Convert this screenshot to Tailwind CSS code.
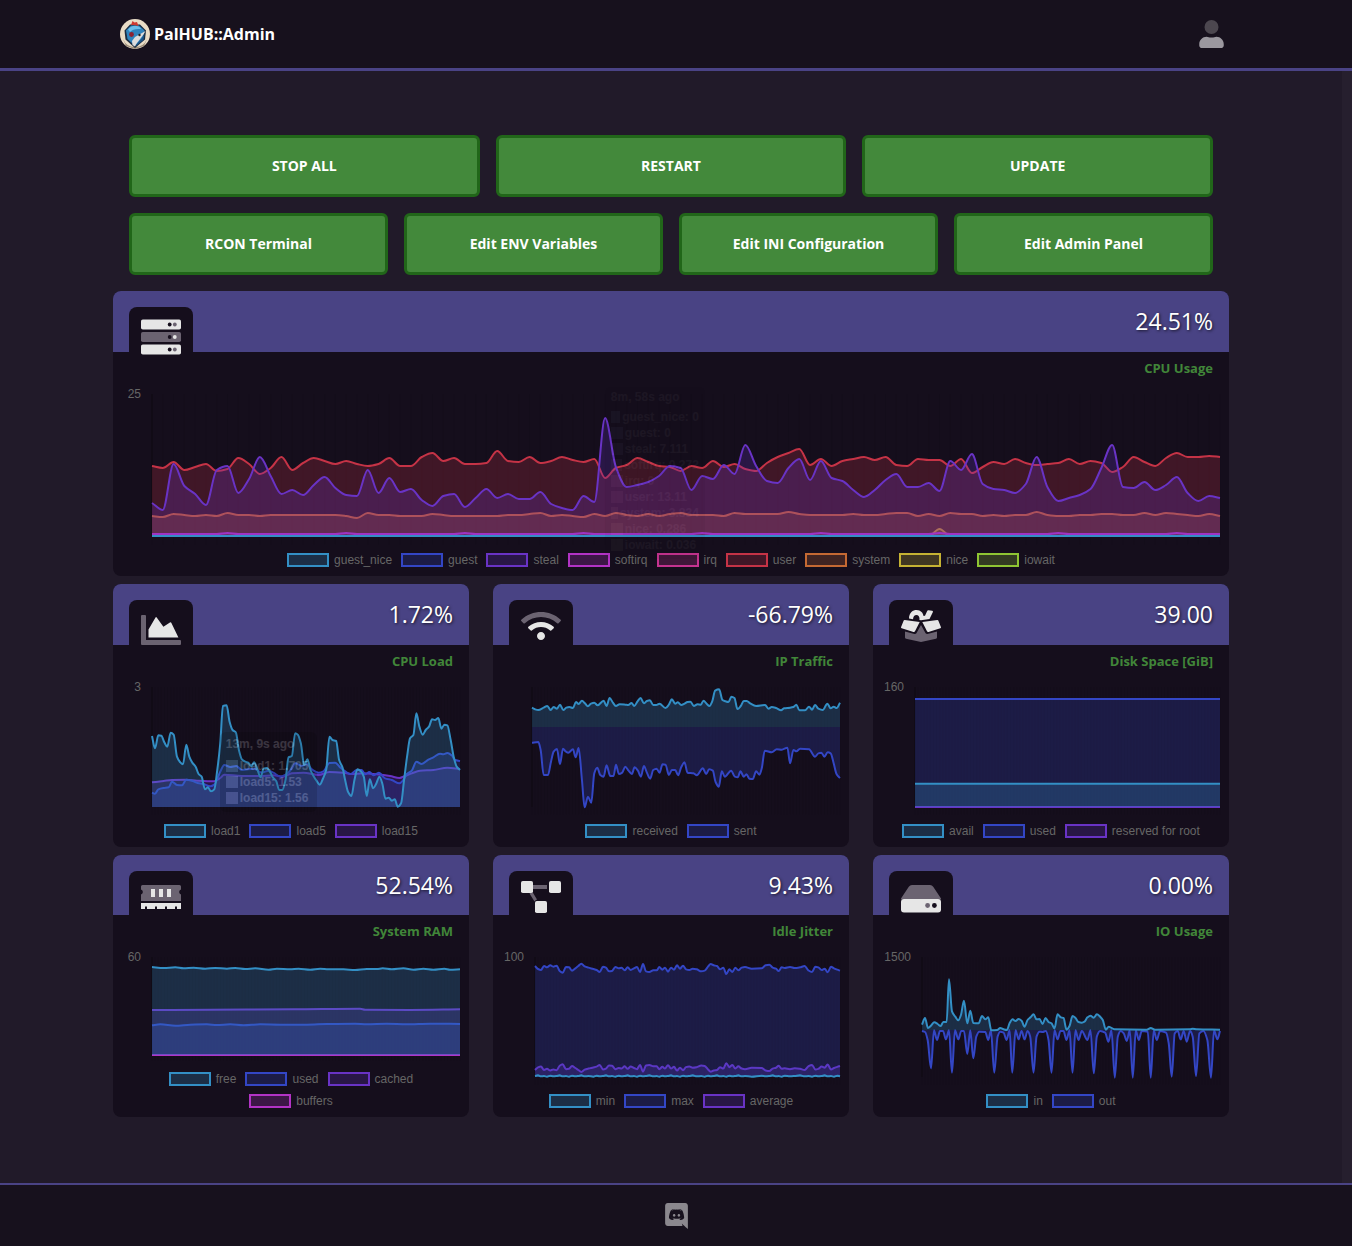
<!DOCTYPE html>
<html lang="en">
<head>
<meta charset="utf-8">
<meta name="viewport" content="width=device-width, initial-scale=1">
<title>PalHUB::Admin</title>
<script src="https://cdn.jsdelivr.net/npm/@tailwindcss/browser@4"></script>
</head>
<body class="flex min-h-screen flex-col bg-[#211a29] font-['Open_Sans','Noto_Sans',sans-serif] text-white">

<header class="border-b-3 border-[#4a4385] bg-[#17111d]">
  <div class="mx-auto flex h-17 max-w-[1116px] items-center justify-between pr-[10px] pl-[2px]">
    <a href="#" class="flex items-center gap-1 text-base font-bold">
      <svg class="size-[30px]" viewBox="0 0 30 30" aria-hidden="true">
        <circle cx="15" cy="15" r="15" fill="#e9dcc6"/>
        <path d="M3 20a13 13 0 0 0 24 0l-3 7-9 3-9-3z" fill="#9c8d78"/>
        <path d="M4.500 11.500 10 5.500h10L26 11.500l-1 9-10 8.500-9.500-8.500z" fill="#1b2c40"/>
        <path d="M6 11.500 11 6.500h8l5.500 5-2 9-7.500 6.500-7.500-7z" fill="#2f83bd"/>
        <path d="M8 10.500c3-5 11-5 13-.500-5-.500-9 .500-11 3z" fill="#69bdea"/>
        <path d="M11 6 12.500 2l2 1.500L17 3l1.500 4-4-1z" fill="#cf3a32"/>
        <circle cx="11.500" cy="15.500" r="2.400" fill="#8e2230"/>
        <path d="M25.500 12 15 18l-3 4 .500 4 2.500 1.500c2-5 6-7 10.500-15.500z" fill="#dcdcdc"/>
        <circle cx="19.500" cy="16" r="1.200" fill="#222"/>
        <path d="M16 27c1-3 5-6 8.500-12l-1 6z" fill="#1b5488"/>
      </svg>
      PalHUB::Admin
    </a>
    <button type="button" aria-label="Account">
      <svg class="h-7 w-[25px]" viewBox="0 0 448 512" aria-hidden="true">
        <circle cx="224" cy="128" r="128" fill="#4c474f"/>
        <path fill="#9b989f" d="M313.600 304c-28.700 0-42.500 16-89.600 16-47.100 0-60.800-16-89.600-16C60.200 304 0 364.200 0 438.400V464c0 26.500 21.500 48 48 48h352c26.500 0 48-21.500 48-48v-25.600c0-74.200-60.200-134.400-134.400-134.400z"/>
      </svg>
    </button>
  </div>
</header>

<main class="flex-1 border-r-10 border-[#261f2e] py-16">
  <div class="mx-auto flex max-w-[1116px] flex-col gap-4">

    <div class="flex flex-col gap-4 px-4 text-sm font-bold [text-shadow:1px_1px_2px_rgba(0,0,0,0.6)]">
      <div class="grid grid-cols-3 gap-4">
        <button type="button" class="h-[62px] rounded-md border-3 border-[#216619] bg-[#43893b]">STOP ALL</button>
        <button type="button" class="h-[62px] rounded-md border-3 border-[#216619] bg-[#43893b]">RESTART</button>
        <button type="button" class="h-[62px] rounded-md border-3 border-[#216619] bg-[#43893b]">UPDATE</button>
      </div>
      <div class="grid grid-cols-4 gap-4">
        <button type="button" class="h-[62px] rounded-md border-3 border-[#216619] bg-[#43893b]">RCON Terminal</button>
        <button type="button" class="h-[62px] rounded-md border-3 border-[#216619] bg-[#43893b]">Edit ENV Variables</button>
        <button type="button" class="h-[62px] rounded-md border-3 border-[#216619] bg-[#43893b]">Edit INI Configuration</button>
        <button type="button" class="h-[62px] rounded-md border-3 border-[#216619] bg-[#43893b]">Edit Admin Panel</button>
      </div>
    </div>

    <div class="grid grid-cols-3 gap-x-6 gap-y-2">

      <!-- CPU usage -->
      <section class="col-span-3 rounded-lg bg-[#150e1c] pb-[9px]">
        <div class="flex h-[61px] items-center justify-between rounded-t-lg bg-[#494384] px-4">
          <div class="mt-4 h-[45px] w-16 self-start rounded-t-lg bg-[#150e1c] px-3 pt-[10px]">
            <svg class="size-10" viewBox="0 0 40 40" aria-hidden="true">
              <rect y="2.500" width="40" height="10" rx="1.800" fill="#e6e6e6"/><rect y="15" width="40" height="10" rx="1.800" fill="#6b6371"/><rect y="27.500" width="40" height="10" rx="1.800" fill="#e6e6e6"/>
              <g fill="#150e1c"><circle cx="28.700" cy="7.500" r="1.900"/><circle cx="28.700" cy="20" r="1.900"/><circle cx="28.700" cy="32.500" r="1.900"/></g>
              <circle cx="33.800" cy="7.500" r="1.900" fill="#6b6371"/><circle cx="33.800" cy="20" r="1.900" fill="#e6e6e6"/><circle cx="33.800" cy="32.500" r="1.900" fill="#6b6371"/>
            </svg>
          </div>
          <p class="text-[23px] [text-shadow:1px_1px_3px_rgba(0,0,0,0.7)]">24.51%</p>
        </div>
        <h2 class="mb-[10px] flex h-8 items-center justify-end px-4 pt-[2px] text-[13px] font-bold text-[#418639]">CPU Usage</h2>
        <div class="flex pr-[9px]">
          <div class="-mt-2 w-[39px] pr-[11px] text-right font-['Liberation_Sans',sans-serif] text-xs text-[#666]">25</div>
          <div class="relative min-w-0 flex-1">
            <svg data-chart="cpu" class="block h-[142px] w-full overflow-visible" viewBox="0 0 1068 142" preserveAspectRatio="none"></svg>
            <div class="absolute -top-[7px] left-[42.4%] w-25 rounded-md bg-black p-[6px] font-['Liberation_Sans',sans-serif] text-xs leading-4 font-bold whitespace-nowrap text-white opacity-3">
              <p class="-mt-1 mb-1">8m, 58s ago</p>
              <p class="flex items-center gap-[2px]"><span class="size-3 bg-[#9fc9e4]"></span>guest_nice: 0</p>
              <p class="flex items-center gap-[2px]"><span class="size-3 bg-[#9fa8e4]"></span>guest: 0</p>
              <p class="flex items-center gap-[2px]"><span class="size-3 bg-[#b89fe4]"></span>steal: 7.111</p>
              <p class="flex items-center gap-[2px]"><span class="size-3 bg-[#d89fe4]"></span>softirq: 0.272</p>
              <p class="flex items-center gap-[2px]"><span class="size-3 bg-[#e49fc9]"></span>irq: 0</p>
              <p class="flex items-center gap-[2px]"><span class="size-3 bg-[#e49fa8]"></span>user: 13.11</p>
              <p class="flex items-center gap-[2px]"><span class="size-3 bg-[#e4b89f]"></span>system: 3.834</p>
              <p class="flex items-center gap-[2px]"><span class="size-3 bg-[#e4d89f]"></span>nice: 0.286</p>
              <p class="flex items-center gap-[2px]"><span class="size-3 bg-[#c9e49f]"></span>iowait: 0.036</p>
            </div>
          </div>
        </div>
        <ul class="mt-[17px] flex flex-wrap justify-center gap-x-[9px] gap-y-2 font-['Liberation_Sans',sans-serif] text-xs leading-[14px] text-[#666]">
          <li class="flex items-center gap-[5px]"><span class="h-[14px] w-[42px] border-2 border-[#338fc5] bg-[#338fc5]/25"></span>guest_nice</li>
          <li class="flex items-center gap-[5px]"><span class="h-[14px] w-[42px] border-2 border-[#3346c5] bg-[#3346c5]/25"></span>guest</li>
          <li class="flex items-center gap-[5px]"><span class="h-[14px] w-[42px] border-2 border-[#6933c5] bg-[#6933c5]/25"></span>steal</li>
          <li class="flex items-center gap-[5px]"><span class="h-[14px] w-[42px] border-2 border-[#b233c5] bg-[#b233c5]/25"></span>softirq</li>
          <li class="flex items-center gap-[5px]"><span class="h-[14px] w-[42px] border-2 border-[#c5338f] bg-[#c5338f]/25"></span>irq</li>
          <li class="flex items-center gap-[5px]"><span class="h-[14px] w-[42px] border-2 border-[#c53346] bg-[#c53346]/25"></span>user</li>
          <li class="flex items-center gap-[5px]"><span class="h-[14px] w-[42px] border-2 border-[#c56933] bg-[#c56933]/25"></span>system</li>
          <li class="flex items-center gap-[5px]"><span class="h-[14px] w-[42px] border-2 border-[#c5b233] bg-[#c5b233]/25"></span>nice</li>
          <li class="flex items-center gap-[5px]"><span class="h-[14px] w-[42px] border-2 border-[#8fc533] bg-[#8fc533]/25"></span>iowait</li>
        </ul>
      </section>

      <!-- CPU load -->
      <section class="rounded-lg bg-[#150e1c] pb-[9px]">
        <div class="flex h-[61px] items-center justify-between rounded-t-lg bg-[#494384] px-4">
          <div class="mt-4 h-[45px] w-16 self-start rounded-t-lg bg-[#150e1c] px-3 pt-[10px]">
            <svg class="size-10" viewBox="0 0 40 40" aria-hidden="true">
              <path d="M1 5h3a1 1 0 0 1 1 1v24h34a1 1 0 0 1 1 1v3a1 1 0 0 1-1 1H1a1 1 0 0 1-1-1V6a1 1 0 0 1 1-1z" fill="#6b6371"/>
              <path d="M7.500 27.500v-8L14.500 7.500q.600-.900 1.200 0l6.700 9.300 6.500-4.300q1-.600 1.500.400l7 14.600z" fill="#e6e6e6"/>
            </svg>
          </div>
          <p class="text-[23px] [text-shadow:1px_1px_3px_rgba(0,0,0,0.7)]">1.72%</p>
        </div>
        <h2 class="mb-[10px] flex h-8 items-center justify-end px-4 pt-[2px] text-[13px] font-bold text-[#418639]">CPU Load</h2>
        <div class="flex pr-[9px]">
          <div class="-mt-2 w-[39px] pr-[11px] text-right font-['Liberation_Sans',sans-serif] text-xs text-[#666]">3</div>
          <div class="relative min-w-0 flex-1">
            <svg data-chart="load" class="block h-[120px] w-full overflow-visible" viewBox="125 321 925 360" preserveAspectRatio="none"></svg>
            <div class="absolute top-[45px] left-[22%] w-[97px] rounded-md bg-black/80 p-[6px] font-['Liberation_Sans',sans-serif] text-xs leading-4 font-bold whitespace-nowrap text-white opacity-16">
              <p class="-mt-[2px] mb-[6px]">13m, 9s ago</p>
              <p class="flex items-center gap-[2px]"><span class="size-3 bg-[#9fc9e4]"></span>load1: 1.705</p>
              <p class="flex items-center gap-[2px]"><span class="size-3 bg-[#c0c6f0]"></span>load5: 1.53</p>
              <p class="flex items-center gap-[2px]"><span class="size-3 bg-[#cfc0f0]"></span>load15: 1.56</p>
            </div>
          </div>
        </div>
        <ul class="mt-[17px] flex flex-wrap justify-center gap-x-[9px] gap-y-2 font-['Liberation_Sans',sans-serif] text-xs leading-[14px] text-[#666]">
          <li class="flex items-center gap-[5px]"><span class="h-[14px] w-[42px] border-2 border-[#338fc5] bg-[#338fc5]/25"></span>load1</li>
          <li class="flex items-center gap-[5px]"><span class="h-[14px] w-[42px] border-2 border-[#3346c5] bg-[#3346c5]/25"></span>load5</li>
          <li class="flex items-center gap-[5px]"><span class="h-[14px] w-[42px] border-2 border-[#6933c5] bg-[#6933c5]/25"></span>load15</li>
        </ul>
      </section>

      <!-- IP traffic -->
      <section class="rounded-lg bg-[#150e1c] pb-[9px]">
        <div class="flex h-[61px] items-center justify-between rounded-t-lg bg-[#494384] px-4">
          <div class="mt-4 h-[45px] w-16 self-start rounded-t-lg bg-[#150e1c] px-3 pt-[10px]">
            <svg class="h-8 w-10" viewBox="0 0 640 512" aria-hidden="true">
              <path fill="#6b6371" d="M634.910 154.880C457.740-8.990 182.190-8.930 5.090 154.880c-6.660 6.160-6.790 16.590-.350 22.980l34.240 33.970c6.140 6.100 16.020 6.230 22.400.380 145.920-133.680 371.300-133.710 517.250 0 6.380 5.850 16.260 5.710 22.400-.380l34.240-33.970c6.430-6.390 6.300-16.820-.360-22.980z"/>
              <path fill="#e6e6e6" d="M320 352c-35.350 0-64 28.650-64 64s28.650 64 64 64 64-28.650 64-64-28.650-64-64-64zm202.670-83.590c-115.260-101.930-290.210-101.820-405.340 0-6.900 6.100-7.120 16.690-.570 23.150l34.440 33.990c6 5.920 15.660 6.320 22.050.800 83.950-72.570 209.740-72.410 293.490 0 6.390 5.520 16.050 5.130 22.050-.800l34.440-33.990c6.560-6.460 6.330-17.060-.560-23.150z"/>
            </svg>
          </div>
          <p class="text-[23px] [text-shadow:1px_1px_3px_rgba(0,0,0,0.7)]">-66.79%</p>
        </div>
        <h2 class="mb-[10px] flex h-8 items-center justify-end px-4 pt-[2px] text-[13px] font-bold text-[#418639]">IP Traffic</h2>
        <div class="flex pr-[9px] pl-[39px]">
          <svg data-chart="traffic" class="block h-[120px] w-full overflow-visible" viewBox="125 321 925 360" preserveAspectRatio="none"></svg>
        </div>
        <ul class="mt-[17px] flex flex-wrap justify-center gap-x-[9px] gap-y-2 font-['Liberation_Sans',sans-serif] text-xs leading-[14px] text-[#666]">
          <li class="flex items-center gap-[5px]"><span class="h-[14px] w-[42px] border-2 border-[#338fc5] bg-[#338fc5]/25"></span>received</li>
          <li class="flex items-center gap-[5px]"><span class="h-[14px] w-[42px] border-2 border-[#3346c5] bg-[#3346c5]/25"></span>sent</li>
        </ul>
      </section>

      <!-- Disk space -->
      <section class="rounded-lg bg-[#150e1c] pb-[9px]">
        <div class="flex h-[61px] items-center justify-between rounded-t-lg bg-[#494384] px-4">
          <div class="mt-4 h-[45px] w-16 self-start rounded-t-lg bg-[#150e1c] px-3 pt-[10px]">
            <svg class="size-10" viewBox="0 0 40 40" aria-hidden="true">
              <path d="M4 21.500 13.500 24q1.200.200 1.900-.800L20 15l4.600 8.200q.700 1 1.900.800L36 21.500v6q0 1-1 1.300L20 32 5 28.800q-1-.300-1-1.300z" fill="#6b6371"/>
              <path d="M3.700 10 18.700 12 14 21.300q-.500.900-1.500.600L.700 18.300q-.900-.300-.600-1.200L2.700 10.600q.300-.700 1-.600zM36.300 10l-15 2L26 21.300q.500.900 1.500.600l11.800-3.600q.900-.300.600-1.200l-2.600-6.500q-.300-.700-1-.600z" fill="#e6e6e6"/>
              <path d="M8 8.500C8 2.500 12 0 15.500 0c4.300 0 6.800 3.200 7 6l1.500-.300L26.300.800q.400-.900 1.300-.600l3.500.600q1.200.300.700 1.400L28.500 9 20 10.200l-1.600-.300c.500-3-.900-4.900-2.900-4.900-2.100 0-3.300 1.500-3.500 4.200z" fill="#e6e6e6"/>
            </svg>
          </div>
          <p class="text-[23px] [text-shadow:1px_1px_3px_rgba(0,0,0,0.7)]">39.00</p>
        </div>
        <h2 class="mb-[10px] flex h-8 items-center justify-end px-4 pt-[2px] text-[13px] font-bold text-[#418639]">Disk Space [GiB]</h2>
        <div class="flex pr-[9px]">
          <div class="-mt-2 w-[42px] pr-[11px] text-right font-['Liberation_Sans',sans-serif] text-xs text-[#666]">160</div>
          <svg data-chart="disk" class="block h-[120px] min-w-0 flex-1 overflow-visible" viewBox="135 321 915 360" preserveAspectRatio="none"></svg>
        </div>
        <ul class="mt-[17px] flex flex-wrap justify-center gap-x-[9px] gap-y-2 font-['Liberation_Sans',sans-serif] text-xs leading-[14px] text-[#666]">
          <li class="flex items-center gap-[5px]"><span class="h-[14px] w-[42px] border-2 border-[#338fc5] bg-[#338fc5]/25"></span>avail</li>
          <li class="flex items-center gap-[5px]"><span class="h-[14px] w-[42px] border-2 border-[#3346c5] bg-[#3346c5]/25"></span>used</li>
          <li class="flex items-center gap-[5px]"><span class="h-[14px] w-[42px] border-2 border-[#6933c5] bg-[#6933c5]/25"></span>reserved for root</li>
        </ul>
      </section>

      <!-- System RAM -->
      <section class="rounded-lg bg-[#150e1c] pb-[9px]">
        <div class="flex h-[60px] items-center justify-between rounded-t-lg bg-[#494384] px-4">
          <div class="mt-4 h-11 w-16 self-start rounded-t-lg bg-[#150e1c] px-3 pt-[10px]">
            <svg class="size-10" viewBox="0 0 40 40" aria-hidden="true">
              <path d="M0 5.500Q0 4 1.500 4h37Q40 4 40 5.500v3a2.600 2.600 0 0 0 0 5V20H0v-6.500a2.600 2.600 0 0 0 0-5z" fill="#6b6371"/>
              <path d="M10 8h4v8h-4zM18 8h4v8h-4zM26 8h4v8h-4zM0 22h40v6h-4v-2.500h-2V28h-8v-2.500h-2V28h-8v-2.500h-2V28H6v-2.500H4V28H0z" fill="#e6e6e6"/>
            </svg>
          </div>
          <p class="text-[23px] [text-shadow:1px_1px_3px_rgba(0,0,0,0.7)]">52.54%</p>
        </div>
        <h2 class="mb-[10px] flex h-8 items-center justify-end px-4 pt-[2px] text-[13px] font-bold text-[#418639]">System RAM</h2>
        <div class="flex pr-[9px]">
          <div class="-mt-2 w-[39px] pr-[11px] text-right font-['Liberation_Sans',sans-serif] text-xs text-[#666]">60</div>
          <svg data-chart="ram" class="block h-[98px] min-w-0 flex-1 overflow-visible" viewBox="125 321 925 294" preserveAspectRatio="none"></svg>
        </div>
        <ul class="mx-auto mt-[17px] flex max-w-[300px] flex-wrap justify-center gap-x-[9px] gap-y-2 font-['Liberation_Sans',sans-serif] text-xs leading-[14px] text-[#666]">
          <li class="flex items-center gap-[5px]"><span class="h-[14px] w-[42px] border-2 border-[#338fc5] bg-[#338fc5]/25"></span>free</li>
          <li class="flex items-center gap-[5px]"><span class="h-[14px] w-[42px] border-2 border-[#3346c5] bg-[#3346c5]/25"></span>used</li>
          <li class="flex items-center gap-[5px]"><span class="h-[14px] w-[42px] border-2 border-[#6933c5] bg-[#6933c5]/25"></span>cached</li>
          <li class="flex items-center gap-[5px]"><span class="h-[14px] w-[42px] border-2 border-[#b233c5] bg-[#b233c5]/25"></span>buffers</li>
        </ul>
      </section>

      <!-- Idle jitter -->
      <section class="rounded-lg bg-[#150e1c] pb-[9px]">
        <div class="flex h-[60px] items-center justify-between rounded-t-lg bg-[#494384] px-4">
          <div class="mt-4 h-11 w-16 self-start rounded-t-lg bg-[#150e1c] px-3 pt-[10px]">
            <svg class="size-10" viewBox="0 0 40 40" aria-hidden="true">
              <path d="M12 4h14v4H12zM8.500 12.500l3-1.500L16 18.500q-1.600.600-2.500 2z" fill="#6b6371"/>
              <g fill="#e6e6e6"><rect width="12" height="12" rx="1.800"/><rect x="28" width="12" height="12" rx="1.800"/><rect x="14" y="20" width="12" height="12" rx="1.800"/></g>
            </svg>
          </div>
          <p class="text-[23px] [text-shadow:1px_1px_3px_rgba(0,0,0,0.7)]">9.43%</p>
        </div>
        <h2 class="mb-[10px] flex h-8 items-center justify-end px-4 pt-[2px] text-[13px] font-bold text-[#418639]">Idle Jitter</h2>
        <div class="flex pr-[9px]">
          <div class="-mt-2 w-[42px] pr-[11px] text-right font-['Liberation_Sans',sans-serif] text-xs text-[#666]">100</div>
          <svg data-chart="jitter" class="block h-[120px] min-w-0 flex-1 overflow-visible" viewBox="135 321 915 360" preserveAspectRatio="none"></svg>
        </div>
        <ul class="mt-[17px] flex flex-wrap justify-center gap-x-[9px] gap-y-2 font-['Liberation_Sans',sans-serif] text-xs leading-[14px] text-[#666]">
          <li class="flex items-center gap-[5px]"><span class="h-[14px] w-[42px] border-2 border-[#338fc5] bg-[#338fc5]/25"></span>min</li>
          <li class="flex items-center gap-[5px]"><span class="h-[14px] w-[42px] border-2 border-[#3346c5] bg-[#3346c5]/25"></span>max</li>
          <li class="flex items-center gap-[5px]"><span class="h-[14px] w-[42px] border-2 border-[#6933c5] bg-[#6933c5]/25"></span>average</li>
        </ul>
      </section>

      <!-- IO usage -->
      <section class="rounded-lg bg-[#150e1c] pb-[9px]">
        <div class="flex h-[60px] items-center justify-between rounded-t-lg bg-[#494384] px-4">
          <div class="mt-4 h-11 w-16 self-start rounded-t-lg bg-[#150e1c] px-3 pt-[10px]">
            <svg class="size-10" viewBox="0 0 40 40" aria-hidden="true">
              <path d="M7.800 5.800Q8.900 4 11 4h18q2.100 0 3.200 1.800L40 17.500v1H0v-1z" fill="#6b6371"/>
              <rect y="18" width="40" height="13.500" rx="3" fill="#e6e6e6"/>
              <circle cx="26.600" cy="24.500" r="2.400" fill="#6b6371"/><circle cx="33.400" cy="24.500" r="2.400" fill="#150e1c"/>
            </svg>
          </div>
          <p class="text-[23px] [text-shadow:1px_1px_3px_rgba(0,0,0,0.7)]">0.00%</p>
        </div>
        <h2 class="mb-[10px] flex h-8 items-center justify-end px-4 pt-[2px] text-[13px] font-bold text-[#418639]">IO Usage</h2>
        <div class="flex pr-[9px]">
          <div class="-mt-2 w-[49px] pr-[11px] text-right font-['Liberation_Sans',sans-serif] text-xs text-[#666]">1500</div>
          <svg data-chart="io" class="block h-[120px] min-w-0 flex-1 overflow-visible" viewBox="155 321 895 360" preserveAspectRatio="none"></svg>
        </div>
        <ul class="mt-[17px] flex flex-wrap justify-center gap-x-[9px] gap-y-2 font-['Liberation_Sans',sans-serif] text-xs leading-[14px] text-[#666]">
          <li class="flex items-center gap-[5px]"><span class="h-[14px] w-[42px] border-2 border-[#338fc5] bg-[#338fc5]/25"></span>in</li>
          <li class="flex items-center gap-[5px]"><span class="h-[14px] w-[42px] border-2 border-[#3346c5] bg-[#3346c5]/25"></span>out</li>
        </ul>
      </section>
    </div>
  </div>
</main>

<footer class="flex h-[63px] items-center justify-center border-t-2 border-[#4a4385] bg-[#17111d]">
  <a href="#" aria-label="Discord">
    <svg class="h-[26px] w-[23px]" viewBox="0 0 448 512" aria-hidden="true"><path fill="#8b888e" d="M297.216 243.200c0 15.616-11.520 28.416-26.112 28.416-14.336 0-26.112-12.800-26.112-28.416s11.520-28.416 26.112-28.416c14.592 0 26.112 12.800 26.112 28.416zm-119.552-28.416c-14.592 0-26.112 12.800-26.112 28.416s11.776 28.416 26.112 28.416c14.592 0 26.112-12.800 26.112-28.416.256-15.616-11.520-28.416-26.112-28.416zM448 52.736V512c-64.494-56.994-43.868-38.128-118.784-107.776l13.568 47.360H52.480C23.552 451.584 0 428.032 0 398.848V52.736C0 23.552 23.552 0 52.480 0h343.040C424.448 0 448 23.552 448 52.736zm-72.960 242.688c0-82.432-36.864-149.248-36.864-149.248-36.864-27.648-71.936-26.880-71.936-26.880l-3.584 4.096c43.520 13.312 63.744 32.512 63.744 32.512-60.811-33.329-132.244-33.335-191.232-7.424-9.472 4.352-15.104 7.424-15.104 7.424s21.248-20.224 67.328-33.536l-2.560-3.072s-35.072-.768-71.936 26.880c0 0-36.864 66.816-36.864 149.248 0 0 21.504 37.120 78.080 38.912 0 0 9.472-11.520 17.152-21.248-32.512-9.728-44.800-30.208-44.800-30.208 3.766 2.636 9.976 6.053 10.496 6.400 43.210 24.198 104.588 32.126 159.744 8.960 8.960-3.328 18.944-8.192 29.440-15.104 0 0-12.800 20.992-46.336 30.464 7.680 9.728 16.896 20.736 16.896 20.736 56.576-1.792 78.336-38.912 78.336-38.912z"/></svg>
  </a>
</footer>

<script>
const C = { blue: '#338fc5', indigo: '#3346c5', violet: '#6933c5', magenta: '#b233c5', pink: '#c5338f', red: '#c53346', orange: '#c56933', yellow: '#c5b233', lime: '#8fc533' };

// "x,y x,y ..." -> points
const pts = s => s.trim().split(/\s+/).map(p => p.split(',').map(Number));
// evenly spaced samples over a width
const even = (ys, w) => ys.map((y, i) => [i * w / (ys.length - 1), y]);
const flat = (y, x0, x1) => [[x0, y], [x1, y]];

// monotone cubic line through the points
function curve(p) {
  const n = p.length, d = [], m = [];
  for (let i = 0; i < n - 1; i++) d.push((p[i + 1][1] - p[i][1]) / (p[i + 1][0] - p[i][0]));
  for (let i = 0; i < n; i++) {
    if (i === 0) m.push(d[0]);
    else if (i === n - 1) m.push(d[n - 2]);
    else if (d[i - 1] * d[i] <= 0) m.push(0);
    else m.push(2 * d[i - 1] * d[i] / (d[i - 1] + d[i]));
  }
  let s = `M${p[0][0]} ${p[0][1]}`;
  for (let i = 0; i < n - 1; i++) {
    const h = (p[i + 1][0] - p[i][0]) / 3;
    s += `C${p[i][0] + h} ${p[i][1] + m[i] * h} ${p[i + 1][0] - h} ${p[i + 1][1] - m[i + 1] * h} ${p[i + 1][0]} ${p[i + 1][1]}`;
  }
  return s;
}

const user = [72,74,68,76,73,70,77,75,64,70,80,74,63,76,69,64,67,70,67,70,72,70,64,72,72,63,59,67,64,70,70,69,57,67,68,63,69,67,63,66,68,65,84,74,71,64,68,72,73,77,72,74,67,73,70,75,77,69,63,59,55,71,65,72,67,65,63,66,63,71,72,65,66,66,72,65,79,73,68,70,65,69,71,70,69,65,70,67,69,78,73,63,68,72,64,59,63,63,62,63];
const steal = [109,116,70,92,100,111,76,72,99,85,63,82,100,96,101,91,83,94,101,102,76,99,84,98,95,106,112,102,100,113,104,95,104,100,105,105,98,110,114,116,102,108,24,73,93,91,88,82,72,74,96,82,85,71,80,51,72,87,89,74,65,86,67,84,87,96,103,96,86,80,93,93,89,97,67,76,60,90,95,96,99,90,63,93,107,104,101,95,74,51,93,94,88,96,91,83,99,107,102,104];
const system = [122,123,120,121,122,121,122,119,121,121,122,121,121,121,121,121,121,121,122,124,119,121,121,122,122,122,120,121,122,122,122,122,122,121,121,120,119,122,121,122,123,120,122,119,121,122,120,122,120,119,121,121,121,122,119,120,120,120,120,118,120,121,121,121,121,120,121,121,120,119,119,122,120,122,119,120,120,122,121,122,121,121,118,121,122,122,121,121,120,120,121,121,119,121,119,120,121,122,120,122];
const nice = user.map((_, i) => i === 73 ? 135 : 142);
const softirq = user.map((_, i) => i % 11 === 7 ? 139 : 140);

const jitterMax = pts('135,348 144,357 153,360 162,348 171,352 181,346 190,350 200,347 209,363 218,368 228,351 237,352 246,362 256,355 265,348 274,341 284,349 295,353 310,357 320,360 329,366 339,350 348,353 357,364 366,363 376,351 386,355 395,353 404,361 413,352 422,360 432,355 441,351 450,366 459,342 468,364 478,366 490,361 500,361 508,351 517,359 525,353 534,365 543,353 552,359 561,346 570,356 579,347 588,358 598,360 608,356 620,358 634,364 644,362 654,350 662,342 671,346 681,348 690,358 700,353 709,372 718,358 727,366 736,353 745,361 755,353 765,351 785,356 815,355 827,346 838,344 848,353 858,356 866,363 875,352 884,354 900,351 914,354 930,352 944,348 955,361 966,366 976,350 985,352 995,360 1004,356 1013,367 1023,350 1032,355 1042,359 1050,362');
const jitterAvg = jitterMax.map(([x, y]) => [x, 654 - (y - 355) * 0.85]);
const jitterMin = jitterMax.map(([x], i) => [x, 678 + [0, -2, 1, 0, 2, -1, 1][i % 7]]);

// first series is painted last, so it lies on top
const charts = {
  cpu: { base: 142, series: [
    [C.blue, even([142, 142], 1068)], [C.indigo, even([142, 142], 1068)], [C.violet, even(steal, 1068)], [C.magenta, even(softirq, 1068)],
    [C.pink, even([142, 142], 1068)], [C.red, even(user, 1068)], [C.orange, even(system, 1068)], [C.yellow, even(nice, 1068)], [C.lime, even([142, 142], 1068)] ] },
  load: { base: 681, series: [
    [C.blue, pts('125,468 134,505 144,466 153,467 162,487 171,500 181,458 190,464 200,530 209,546 218,553 228,494 237,530 246,548 256,560 265,582 274,590 284,628 293,622 302,634 312,628 321,570 330,490 338,378 349,376 358,425 367,450 377,458 386,510 395,538 405,545 414,548 423,558 432,547 442,570 451,592 460,566 470,564 479,575 488,592 498,603 507,630 516,630 526,600 535,532 545,528 555,460 563,464 572,490 582,555 592,538 601,570 610,588 619,602 629,614 638,597 648,570 658,470 667,480 678,483 687,540 697,562 705,600 714,636 724,648 733,600 742,568 752,574 761,590 770,648 779,598 789,625 798,612 808,590 817,612 826,656 836,653 845,662 854,658 863,680 873,670 882,600 891,530 900,475 910,465 919,400 928,440 938,464 947,450 957,440 966,418 975,420 985,414 994,446 1003,434 1012,436 1022,480 1031,530 1040,560 1050,570')],
    [C.indigo, pts('125,638 134,641 144,628 160,624 175,622 185,605 200,615 215,616 228,599 245,602 262,609 280,612 300,619 312,614 330,575 342,555 360,561 378,558 395,570 432,566 455,578 475,572 490,578 510,590 530,582 545,565 555,550 575,558 590,552 605,568 625,578 640,574 658,549 675,548 690,562 722,582 740,570 755,570 765,583 778,576 790,586 806,578 825,595 845,600 868,610 880,600 890,582 905,572 919,545 935,552 955,539 970,532 990,521 1000,523 1012,519 1025,526 1035,540 1050,543')],
    [C.violet, pts('125,607 160,603 185,600 228,599 260,602 310,604 330,594 342,584 395,588 450,588 490,586 520,590 545,580 580,578 625,585 658,576 700,578 722,582 760,580 800,583 840,588 868,594 885,588 905,580 930,572 970,570 1012,563 1050,567')] ] },
  traffic: { base: 441, series: [
    [C.blue, pts('125,383 134,388 144,390 160,383 171,378 181,390 190,381 200,386 209,374 219,390 228,383 237,381 248,384 257,366 265,372 275,362 284,370 293,379 302,371 312,368 322,376 340,362 349,378 358,354 368,368 377,378 388,373 405,374 414,375 424,369 432,378 442,364 451,354 461,370 470,363 479,361 489,375 498,375 508,371 526,384 536,374 545,358 555,371 563,367 573,375 583,371 592,366 601,365 611,378 622,373 632,374 640,362 650,372 658,378 666,365 675,332 687,328 697,360 706,364 715,366 724,350 733,354 742,387 752,378 761,363 770,363 780,370 798,378 825,375 835,386 845,381 858,384 873,391 882,385 900,383 910,381 919,374 928,391 945,391 957,380 966,389 975,375 985,386 998,390 1012,371 1022,385 1031,380 1040,384 1050,368')],
    [C.indigo, pts('125,488 144,486 151,510 160,585 173,585 182,545 190,515 200,507 209,553 218,506 226,514 234,518 248,508 256,532 265,504 275,600 283,682 293,650 303,668 312,580 321,563 330,585 340,590 349,556 360,588 370,588 377,554 386,582 396,578 405,560 415,572 425,582 433,562 443,572 452,590 461,558 470,578 480,596 489,570 499,566 508,578 517,553 526,554 536,585 545,570 555,570 564,586 573,562 583,547 592,578 610,580 620,586 638,565 648,582 657,568 668,572 676,605 686,620 695,574 704,590 723,572 734,590 743,592 751,574 761,590 769,583 778,596 788,597 798,574 808,584 815,565 824,512 845,517 860,508 875,509 892,503 900,550 910,510 919,514 930,506 957,508 975,530 985,520 994,518 1003,530 1013,517 1022,520 1031,550 1040,583 1050,594')] ] },
  disk: { base: 681, series: [[C.blue, flat(611, 135, 1050)], [C.indigo, flat(357, 135, 1050)], [C.violet, flat(681, 135, 1050)]] },
  ram: { base: 615, series: [
    [C.blue, pts('125,351 160,354 195,352 220,355 250,353 285,356 315,354 350,356 375,354 405,357 435,355 475,359 500,356 540,358 565,356 600,359 630,356 655,358 700,358 735,360 770,357 800,357 818,355 845,358 880,355 910,359 940,356 970,359 1003,356 1020,359 1050,358')],
    [C.indigo, pts('125,526 150,523 195,527 240,524 290,523 320,525 360,523 400,526 450,523 510,524 590,524 650,522 735,521 770,523 830,521 890,523 960,521 1050,522')],
    [C.violet, pts('125,480 300,479 550,478 750,476 765,479 900,480 1050,478')],
    [C.magenta, flat(615, 125, 1050)] ] },
  jitter: { base: 681, series: [[C.blue, jitterMin], [C.indigo, jitterMax], [C.violet, jitterAvg]] },
  io: { base: 540, series: [
    [C.blue, pts('155,524 164,504 173,534 182,527 192,517 202,522 211,528 219,516 229,516 236,388 245,484 255,500 264,511 272,495 281,452 291,520 300,482 309,519 325,520 335,498 345,508 354,502 363,541 381,540 390,534 400,538 410,540 418,520 427,508 436,513 445,507 454,512 463,530 472,510 481,502 490,493 499,508 508,507 517,522 526,504 535,516 544,520 553,535 562,493 572,502 580,504 589,539 598,528 607,498 616,504 625,516 635,518 643,515 652,502 661,497 671,503 680,493 690,500 698,510 707,539 716,530 733,538 830,539 842,534 855,539 960,538 968,536 980,538 1050,539')],
    [C.indigo, pts('155,543 164,546 172,570 182,655 191,541 200,570 209,543 218,543 227,568 236,541 245,668 254,541 264,568 273,543 281,543 291,612 300,541 309,625 318,560 327,545 345,546 354,570 362,541 372,668 382,560 390,545 400,548 409,570 418,541 426,668 436,541 445,568 454,543 463,568 472,543 480,560 490,668 499,560 508,545 517,546 527,543 535,570 544,668 553,541 562,568 571,543 580,543 589,570 598,541 607,668 616,541 625,570 635,543 652,570 661,541 671,670 680,560 690,543 705,548 715,575 724,541 734,683 743,560 752,543 761,550 770,573 779,541 788,683 797,541 806,570 815,543 833,545 842,683 851,541 860,570 870,543 888,548 896,580 905,680 914,550 923,543 932,568 941,543 950,575 960,543 968,560 978,678 988,550 1000,543 1012,570 1023,683 1032,541 1042,568 1050,543')] ] },
};

for (const svg of document.querySelectorAll('[data-chart]')) {
  const { base, series } = charts[svg.dataset.chart];
  const { x, y, width, height } = svg.viewBox.baseVal;
  let grid = '';
  for (let i = 0; i < 100; i++) grid += `M${x + i * width / 99} ${y}V${y + height * 1.06}`;
  let out = `<path d="${grid}" stroke="#000" stroke-opacity=".06" fill="none" vector-effect="non-scaling-stroke"/>`;
  out += `<path d="M${x} ${y}V${y + height}" stroke="#000" stroke-opacity=".3" fill="none" vector-effect="non-scaling-stroke"/>`;
  for (const [color, p] of [...series].reverse()) {
    const line = curve(p);
    out += `<path d="${line}L${p[p.length - 1][0]} ${base}L${p[0][0]} ${base}Z" fill="${color}" fill-opacity=".25"/>`;
    out += `<path d="${line}" fill="none" stroke="${color}" stroke-width="2" stroke-linejoin="round" vector-effect="non-scaling-stroke"/>`;
  }
  svg.innerHTML = out;
}
</script>
</body>
</html>
